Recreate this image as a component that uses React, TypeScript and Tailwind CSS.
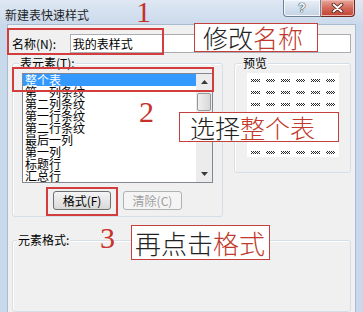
import React from 'react'

const ITEMS = ['整个表', '第一列条纹', '第二列条纹', '第一行条纹', '第二行条纹', '最后一列', '第一列', '标题行', '汇总行']

function HelpButton() {
  return (
    <div className="flex h-[17px] w-[38px] items-center justify-center rounded-bl-[4px] border border-t-0 border-[#6f8197] bg-gradient-to-b from-[#e9f0f8] to-[#c3d2e3] shadow-[inset_0_0_0_1px_#f4f8fc]">
      <span className="font-['Liberation_Sans',sans-serif] text-[12px] font-bold leading-[12px] text-white [text-shadow:0_0_1px_#2a3a4e,0_0_1px_#2a3a4e,0_0_1px_#2a3a4e]">
        ?
      </span>
    </div>
  )
}

function CloseButton() {
  return (
    <div className="flex h-[17px] w-[34px] items-center justify-center rounded-br-[4px] border border-t-0 border-l-0 border-[#6d2a22] bg-gradient-to-b from-[#e9a79c] via-[#d36a5b] to-[#c2402f] shadow-[inset_0_0_0_1px_#f0b9b0]">
      <svg width="13" height="10" viewBox="0 0 13 10">
        <path d="M2.5 1.5 L10.5 8.5 M10.5 1.5 L2.5 8.5" stroke="#4a1510" strokeWidth="3.6" strokeLinecap="round" />
        <path d="M2.5 1.5 L10.5 8.5 M10.5 1.5 L2.5 8.5" stroke="#ffffff" strokeWidth="2" strokeLinecap="round" />
      </svg>
    </div>
  )
}

function Arrow({ up }: { up?: boolean }) {
  return (
    <div className="flex h-[16px] w-[16px] items-center justify-center">
      <svg width="7" height="4" viewBox="0 0 7 4">
        <path d={up ? 'M0 4 L3.5 0 L7 4 Z' : 'M0 0 L3.5 4 L7 0 Z'} fill="#3a3a3a" />
      </svg>
    </div>
  )
}

function PreviewGrid() {
  const cols = [8, 23, 38, 53, 68, 83]
  const rows = [7, 19, 31, 43, 55, 67, 79]
  return (
    <svg width="92" height="84" viewBox="0 0 92 84">
      <defs>
        <pattern id="dots" width="2" height="2" patternUnits="userSpaceOnUse">
          <rect x="0" y="0" width="1" height="1" fill="#2a2a2a" />
          <rect x="1" y="1" width="1" height="1" fill="#2a2a2a" />
        </pattern>
      </defs>
      {rows.map((r) =>
        cols.map((c) => <rect key={`${r}-${c}`} x={c - 4} y={r - 1} width="9" height="3" fill="url(#dots)" />)
      )}
    </svg>
  )
}

export default function App() {
  return (
    <div className="relative h-[312px] w-[363px] overflow-hidden bg-[#c9d9ec] font-['Noto_Sans_CJK_SC',sans-serif] text-[12px] leading-[12px] text-black">
      {/* 标题栏 */}
      <div className="flex h-[25px] items-start justify-between bg-gradient-to-b from-[#dfe8f3] to-[#cad9eb]">
        <span className="ml-[5px] mt-[9px] text-[#1e1e1e]">新建表快速样式</span>
        <div className="mr-[8px] flex">
          <HelpButton />
          <CloseButton />
        </div>
      </div>

      {/* 客户区 */}
      <div className="mx-[8px] flex h-[287px] flex-col bg-[#f0f0f0] px-[4px] shadow-[0_0_0_1px_#a9bbd0]">
        {/* 名称 */}
        <div className="mt-[9px] flex h-[19px] items-center">
          <span className="w-[58px]">名称(N):</span>
          <div className="flex h-[19px] w-[283px] items-center border border-[#abadb3] bg-white pl-[2px]">
            我的表样式
          </div>
        </div>

        <div className="mt-[10px] flex items-start gap-[11px]">
          {/* 表元素 */}
          <div className="relative flex h-[154px] w-[211px] flex-col rounded-[3px] border border-[#d5dfe5] shadow-[inset_1px_1px_0_#fff]">
            <span className="absolute -top-[7px] left-[6px] bg-[#f0f0f0] px-[1px]">表元素(T):</span>
            <div className="ml-[9px] mt-[9px] flex h-[110px] w-[191px] border border-[#828790] bg-white">
              <div className="flex w-[173px] flex-col">
                {ITEMS.map((item, i) => (
                  <div
                    key={item}
                    className={
                      i === 0
                        ? 'h-[12px] whitespace-nowrap bg-[#3399ff] pl-[2px] leading-[12px] text-white'
                        : 'h-[12px] whitespace-nowrap pl-[2px] leading-[12px]'
                    }
                  >
                    {item}
                  </div>
                ))}
              </div>
              <div className="flex w-[16px] flex-col bg-[#ececec]">
                <Arrow up />
                <div className="mx-[1px] mt-[3px] h-[18px] rounded-[2px] border border-[#979797] bg-gradient-to-r from-[#f0f0f0] to-[#d8d8d8]" />
                <div className="flex-1" />
                <Arrow />
              </div>
            </div>
            <div className="ml-[40px] mt-[8px] flex gap-[12px]">
              <div className="flex h-[19px] w-[58px] items-center justify-center rounded-[3px] border border-[#707070] bg-gradient-to-b from-[#f4f4f4] to-[#d9d9d9]">
                格式(F)
              </div>
              <div className="flex h-[19px] w-[59px] items-center justify-center rounded-[3px] border border-[#adb2b5] bg-[#f4f4f4] text-[#a0a0a0]">
                清除(C)
              </div>
            </div>
          </div>

          {/* 预览 */}
          <div className="relative flex h-[110px] w-[117px] flex-col rounded-[3px] border border-[#d5dfe5] shadow-[inset_1px_1px_0_#fff]">
            <span className="absolute -top-[7px] left-[7px] bg-[#f0f0f0] px-[1px]">预览</span>
            <div className="ml-[12px] mt-[9px] h-[84px] w-[92px] bg-white">
              <PreviewGrid />
            </div>
          </div>
        </div>

        {/* 元素格式 */}
        <div className="relative mt-[23px] h-[100px] w-[339px] rounded-[3px] border border-[#d5dfe5] shadow-[inset_1px_1px_0_#fff]">
          <span className="absolute -top-[7px] left-[4px] bg-[#f0f0f0] px-[1px]">元素格式:</span>
        </div>
      </div>

      {/* 标注红框 */}
      <div className="absolute left-[7px] top-[28px] h-[27px] w-[157px] border-2 border-[#d43d3d]" />
      <div className="absolute left-[12px] top-[67px] h-[25px] w-[202px] border-2 border-[#d43d3d]" />
      <div className="absolute left-[46px] top-[187px] h-[29px] w-[72px] border-2 border-[#d43d3d]" />

      {/* 序号 */}
      <span className="absolute left-[136px] top-0 font-['Liberation_Serif',serif] text-[30px] leading-[24px] text-[#c8312b]">1</span>
      <span className="absolute left-[139px] top-[97px] font-['Liberation_Serif',serif] text-[30px] leading-[30px] text-[#c8312b]">2</span>
      <span className="absolute left-[100px] top-[223px] font-['Liberation_Serif',serif] text-[30px] leading-[30px] text-[#c8312b]">3</span>

      {/* 说明文字 */}
      <div className="absolute left-[194px] top-[23px] flex h-[29px] w-[124px] items-center border border-[#c4403c] bg-white pl-[8px] text-[25px] font-light leading-[25px] text-[#222]">
        修改<span className="text-[#c0392b]">名称</span>
      </div>
      <div className="absolute left-[179px] top-[112px] flex h-[30px] w-[160px] items-center border border-[#c4403c] bg-white pl-[10px] text-[25px] font-light leading-[25px] text-[#222]">
        选择<span className="text-[#c0392b]">整个表</span>
      </div>
      <div className="absolute left-[131px] top-[225px] flex h-[35px] w-[139px] items-center border border-[#c4403c] bg-white pl-[3px] text-[26px] font-light leading-[26px] text-[#222]">
        再点击<span className="text-[#c0392b]">格式</span>
      </div>
    </div>
  )
}
